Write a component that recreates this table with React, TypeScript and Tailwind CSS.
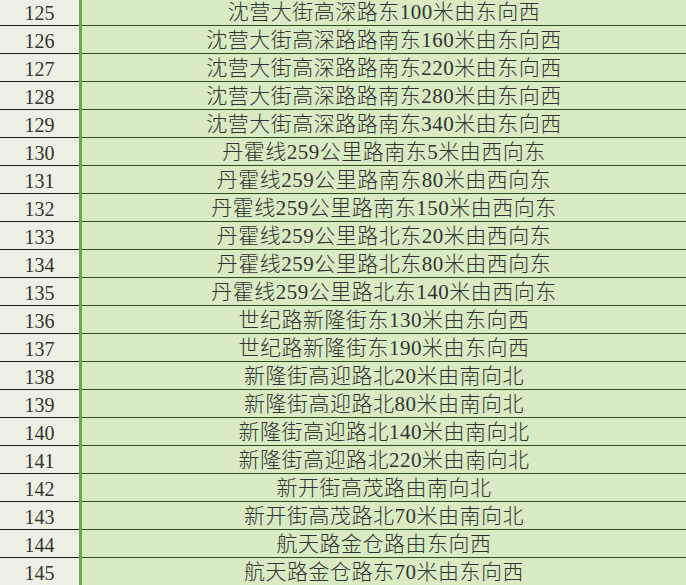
const rows: [number, string][] = [
  [125, "沈营大街高深路东100米由东向西"],
  [126, "沈营大街高深路路南东160米由东向西"],
  [127, "沈营大街高深路路南东220米由东向西"],
  [128, "沈营大街高深路路南东280米由东向西"],
  [129, "沈营大街高深路路南东340米由东向西"],
  [130, "丹霍线259公里路南东5米由西向东"],
  [131, "丹霍线259公里路南东80米由西向东"],
  [132, "丹霍线259公里路南东150米由西向东"],
  [133, "丹霍线259公里路北东20米由西向东"],
  [134, "丹霍线259公里路北东80米由西向东"],
  [135, "丹霍线259公里路北东140米由西向东"],
  [136, "世纪路新隆街东130米由东向西"],
  [137, "世纪路新隆街东190米由东向西"],
  [138, "新隆街高迎路北20米由南向北"],
  [139, "新隆街高迎路北80米由南向北"],
  [140, "新隆街高迎路北140米由南向北"],
  [141, "新隆街高迎路北220米由南向北"],
  [142, "新开街高茂路由南向北"],
  [143, "新开街高茂路北70米由南向北"],
  [144, "航天路金仓路由东向西"],
  [145, "航天路金仓路东70米由东向西"],
];

export default function App() {
  return (
    <div className="w-[686px] h-[585px] overflow-hidden bg-[#d8ebc3]">
      <div className="-mt-[2px] flex">
        {/* row numbers */}
        <div className="w-[79px] shrink-0 bg-[#eef0e5]">
          {rows.map(([n]) => (
            <div
              key={n}
              className="h-[28px] border-b border-[#1a1a1a] flex items-center justify-center pt-[2px] text-[20px] text-[#333] font-['Liberation_Serif',serif]"
            >
              {n}
            </div>
          ))}
        </div>
        {/* green divider */}
        <div className="w-[3px] shrink-0 bg-[#6ea94a]" />
        {/* location text */}
        <div className="flex-1">
          {rows.map(([n, text]) => (
            <div
              key={n}
              className="h-[28px] border-b border-[#2e4a1e] flex items-center justify-center pt-[3px] text-[21px] font-light tracking-[0.5px] text-[#333] font-['Liberation_Serif','Noto_Sans_CJK_SC',serif] whitespace-nowrap"
            >
              {text}
            </div>
          ))}
        </div>
      </div>
    </div>
  );
}
